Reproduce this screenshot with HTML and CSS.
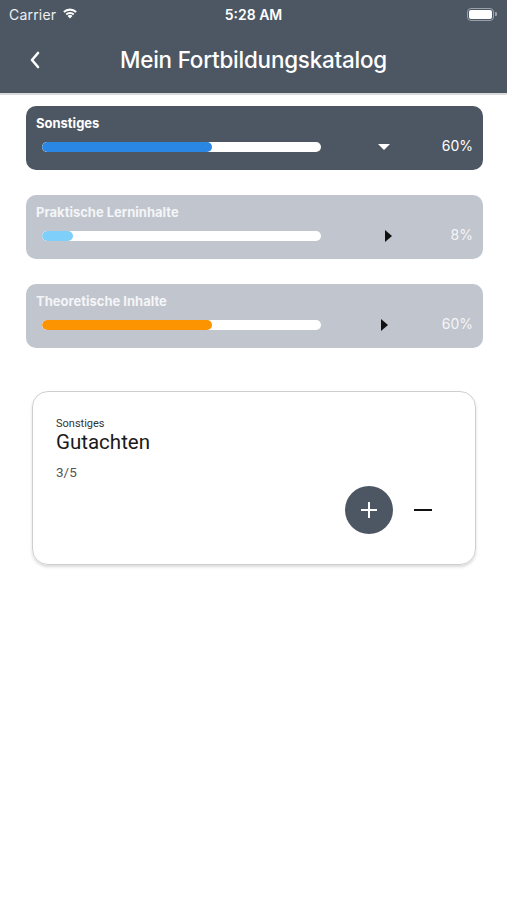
FILE: index.html
```html
<!DOCTYPE html>
<html lang="de">
<head>
    <meta charset="UTF-8">
    <meta name="viewport" content="width=device-width, initial-scale=1.0">
    <title>Mein Fortbildungskatalog</title>
    <link rel="stylesheet" href="styles.css">
</head>
<body>
    <header class="app-header">
        <div class="status-bar">
            <div class="status-left">
                <span>Carrier</span>
                <svg class="wifi" width="16" height="12" viewBox="0 0 16 12">
                    <path d="M8 11.5 L5.6 8.9 A3.5 3.5 0 0 1 10.4 8.9 Z" fill="#fff"/>
                    <path d="M3.6 6.8 A6.3 6.3 0 0 1 12.4 6.8 L11.1 8.2 A4.4 4.4 0 0 0 4.9 8.2 Z" fill="#fff"/>
                    <path d="M1.2 4.3 A9.8 9.8 0 0 1 14.8 4.3 L13.4 5.8 A7.8 7.8 0 0 0 2.6 5.8 Z" fill="#fff"/>
                </svg>
            </div>
            <span class="status-time">5:28 AM</span>
            <div class="status-right">
                <div class="battery"><div class="battery-level"></div></div>
                <div class="battery-cap"></div>
            </div>
        </div>
        <nav class="nav-bar">
            <svg class="back" width="14" height="18" viewBox="0 0 14 18">
                <path d="M10 2 L4 9 L10 16" fill="none" stroke="#fff" stroke-width="2.6" stroke-linecap="round" stroke-linejoin="round"/>
            </svg>
            <h1>Mein Fortbildungskatalog</h1>
        </nav>
    </header>

    <main class="content">
        <div class="category active">
            <div class="category-title">Sonstiges</div>
            <div class="category-row">
                <div class="progress"><div class="progress-fill blue" style="width: 61%"></div></div>
                <div class="arrow"><span class="tri-down"></span></div>
                <div class="percent">60%</div>
            </div>
        </div>

        <div class="category">
            <div class="category-title">Praktische Lerninhalte</div>
            <div class="category-row">
                <div class="progress"><div class="progress-fill light" style="width: 11%"></div></div>
                <div class="arrow"><span class="tri-right"></span></div>
                <div class="percent">8%</div>
            </div>
        </div>

        <div class="category">
            <div class="category-title">Theoretische Inhalte</div>
            <div class="category-row">
                <div class="progress"><div class="progress-fill orange" style="width: 61%"></div></div>
                <div class="arrow"><span class="tri-right"></span></div>
                <div class="percent">60%</div>
            </div>
        </div>

        <div class="item-card">
            <div class="item-category">Sonstiges</div>
            <div class="item-name">Gutachten</div>
            <div class="item-count">3/5</div>
            <div class="item-actions">
                <button class="btn-plus">
                    <svg width="20" height="20" viewBox="0 0 20 20">
                        <path d="M10 2 V18 M2 10 H18" stroke="#fff" stroke-width="2"/>
                    </svg>
                </button>
                <button class="btn-minus"><span></span></button>
            </div>
        </div>
    </main>
</body>
</html>
```

FILE: styles.css
```css
body {
    margin: 0;
    background: #fff;
    font-family: 'Inter', 'Roboto', sans-serif;
    color: #222;
}

.app-header {
    background: #4d5763;
    color: #fff;
    border-bottom: 2px solid #dadada;
}

.status-bar {
    height: 28px;
    display: flex;
    align-items: center;
    justify-content: space-between;
    padding: 0 9px 0 9px;
    font-size: 14px;
    position: relative;
}

.status-left {
    display: flex;
    align-items: center;
    gap: 6px;
    color: #eef0f2;
}

.status-left span {
    letter-spacing: 0.2px;
}

.wifi {
    margin-top: -2px;
}

.status-time {
    position: absolute;
    left: 0;
    right: 0;
    text-align: center;
    font-weight: 600;
    font-size: 14px;
    pointer-events: none;
}

.status-right {
    display: flex;
    align-items: center;
    margin-right: 1px;
}

.battery {
    width: 23px;
    height: 9px;
    border: 1.5px solid #9aa1a9;
    border-radius: 4px;
    padding: 1px;
}

.battery-level {
    width: 100%;
    height: 100%;
    background: #fff;
    border-radius: 2px;
}

.battery-cap {
    width: 2px;
    height: 4px;
    background: #9aa1a9;
    border-radius: 0 1px 1px 0;
    margin-left: 1px;
}

.nav-bar {
    height: 65px;
    display: flex;
    align-items: center;
    position: relative;
}

.back {
    margin-left: 28px;
    margin-top: -2px;
}

.nav-bar h1 {
    position: absolute;
    left: 0;
    right: 0;
    margin: 0;
    text-align: center;
    font-size: 22.4px;
    font-weight: 500;
    letter-spacing: -0.2px;
    margin-top: -3px;
    pointer-events: none;
}

.content {
    padding: 11px 24px 40px 26px;
}

.category {
    height: 64px;
    box-sizing: border-box;
    background: #c1c5ce;
    border-radius: 10px;
    padding: 9px 10px 0 10px;
    margin-bottom: 25px;
    color: #f4f5f7;
}

.category.active {
    background: #4d5763;
    color: #fff;
}

.category-title {
    font-size: 13px;
    font-weight: 700;
    line-height: 16px;
}

.category-row {
    display: flex;
    align-items: center;
    margin-top: 9px;
}

.progress {
    width: 279px;
    height: 10px;
    margin-left: 6px;
    background: #fff;
    border-radius: 5px;
    overflow: hidden;
}

.progress-fill {
    height: 100%;
    border-radius: 5px;
}

.progress-fill.blue {
    background: #2a87e4;
}

.progress-fill.light {
    background: #7ed0fa;
}

.progress-fill.orange {
    background: #fb9400;
}

.arrow {
    flex: 1;
    display: flex;
    justify-content: center;
}

.tri-down {
    width: 0;
    height: 0;
    border-left: 6px solid transparent;
    border-right: 6px solid transparent;
    border-top: 6px solid #fff;
    margin-left: 6px;
}

.tri-right {
    width: 0;
    height: 0;
    border-top: 6px solid transparent;
    border-bottom: 6px solid transparent;
    border-left: 7px solid #111;
    margin-left: 6px;
}

.percent {
    font-size: 14px;
    text-align: right;
    margin-top: -3px;
}

.item-card {
    margin: 43px 7px 0 6px;
    height: 174px;
    box-sizing: border-box;
    border: 1px solid #cfcfcf;
    border-radius: 16px;
    box-shadow: 0 2px 3px rgba(0, 0, 0, 0.15);
    padding: 25px 43px 0 23px;
    font-family: 'Roboto', sans-serif;
}

.item-category {
    font-size: 11px;
    color: #333;
    line-height: 14px;
}

.item-name {
    font-size: 20.5px;
    line-height: 22px;
    color: #1a1a1a;
}

.item-count {
    font-size: 13.5px;
    color: #555;
    margin-top: 11px;
    line-height: 16px;
}

.item-actions {
    display: flex;
    justify-content: flex-end;
    align-items: center;
    gap: 21px;
    margin-top: 6px;
}

.btn-plus {
    width: 48px;
    height: 48px;
    border-radius: 50%;
    border: none;
    background: #4d5763;
    display: flex;
    align-items: center;
    justify-content: center;
    padding: 0;
}

.btn-minus {
    border: none;
    background: none;
    padding: 0;
    width: 18px;
    height: 20px;
    display: flex;
    align-items: center;
}

.btn-minus span {
    width: 18px;
    height: 2px;
    background: #111;
}
```
